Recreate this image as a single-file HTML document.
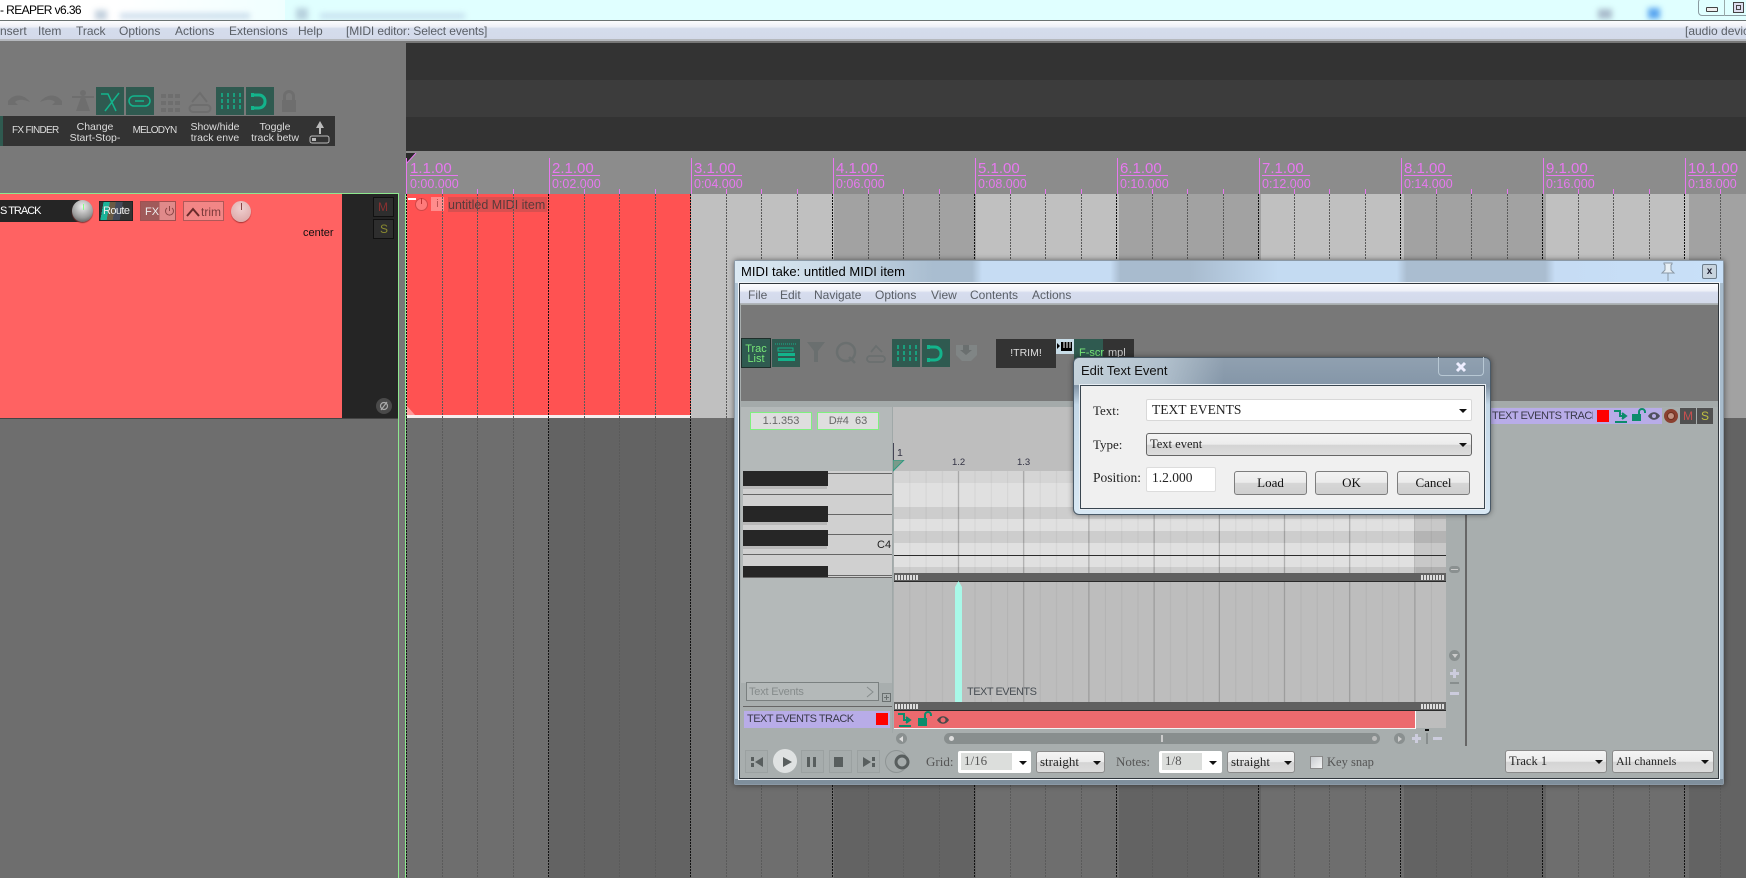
<!DOCTYPE html>
<html><head><meta charset="utf-8"><title>REAPER v6.36</title>
<style>
html,body{margin:0;padding:0;width:1746px;height:878px;overflow:hidden;background:#6e6e6e;font-family:"Liberation Sans",sans-serif}
div,span,svg{position:absolute;display:block;box-sizing:border-box}
.t{white-space:nowrap;line-height:14px}
.m{font-size:12px;color:#5a5f66;top:24px}
.mm{font-size:12px;color:#5a5f66;top:288px}
.rb{font-size:15px;color:#e878f0;top:161px;width:48px;border-bottom:1px solid #e878f0;height:15px;line-height:15px}
.rt{font-size:12.500px;color:#e878f0;top:177px;white-space:nowrap;line-height:14px}
.tk{width:1px;top:158px;height:36px;background:#e878f0}
.tb{font-size:10.500px;color:#ddd;line-height:11px;text-align:center;white-space:nowrap}
.teal{background:#2f5a50}
.s{font-family:"Liberation Serif",serif;font-size:13px;white-space:nowrap;line-height:15px}
.cb{background:linear-gradient(#f4f4f4 0,#ececec 50%,#d4d4d4 52%,#dcdcdc 100%);border:1px solid #8a8a8a;border-radius:3px}
.wb{background:#fff;border-radius:2px}
.ar{width:0;height:0;border-left:4px solid transparent;border-right:4px solid transparent;border-top:4px solid #111}
.bt{background:#a6acac;border:1px solid #9ba1a1;width:23px;height:23px;top:750px}
.dbtn{top:471px;width:73px;height:24px;text-align:center;line-height:22px;color:#111;background:linear-gradient(#f2f2f2 0,#ebebeb 48%,#d6d6d6 50%,#cfcfcf 100%);border:1px solid #7d7d7d;border-radius:3px;font-family:"Liberation Serif",serif;font-size:13px}
.nt{font-size:11px;letter-spacing:-.5px;color:#3a3a4a}
</style></head><body>

<!-- top title bar -->
<div style="left:0;top:0;width:1746px;height:20px;background:#e0ffff"></div>
<div style="left:0;top:0;width:115px;height:20px;background:#fff"></div>
<div style="left:115px;top:0;width:170px;height:20px;background:linear-gradient(90deg,#fff,#f0ffff)"></div>
<div style="left:95px;top:10px;width:12px;height:10px;background:#9db3c8;filter:blur(3px);opacity:.6"></div>
<div style="left:120px;top:13px;width:130px;height:6px;background:#b0c8e0;filter:blur(3px);opacity:.6"></div>
<div style="left:296px;top:8px;width:12px;height:12px;background:#9db3c8;filter:blur(3px);opacity:.6"></div>
<div style="left:320px;top:13px;width:145px;height:6px;background:#b8cfe6;filter:blur(3px);opacity:.6"></div>
<div style="left:1598px;top:9px;width:14px;height:10px;background:#a9bccc;filter:blur(3px)"></div>
<div style="left:1648px;top:8px;width:12px;height:11px;background:#5aa6f0;filter:blur(3px)"></div>
<div class="t" style="left:0;top:3px;font-size:12px;letter-spacing:-.6px;color:#000">- REAPER v6.36</div>
<div style="left:1698px;top:-2px;width:60px;height:18px;border:1px solid #8a9aa0;border-radius:4px"></div>
<div style="left:1724px;top:0;width:1px;height:16px;background:#9aa"></div>
<div style="left:1706px;top:7px;width:12px;height:5px;border:1px solid #444;background:#eee;border-radius:1px"></div>
<div style="left:1733px;top:2px;width:11px;height:11px;border:1px solid #444;background:#dde"></div>
<div style="left:1736px;top:5px;width:5px;height:5px;border:1px solid #444"></div>
<div style="left:0;top:20px;width:1746px;height:1px;background:#6a7272"></div>
<!-- main menu -->
<div style="left:0;top:21px;width:1746px;height:19px;background:linear-gradient(#fcfcfe 0,#eef0f7 30%,#d5dcec 40%,#d3daea 100%)"></div>
<div style="left:0;top:39px;width:1746px;height:2px;background:#b5b8bd"></div>
<div class="t m" style="left:0">nsert</div>
<div class="t m" style="left:38px">Item</div>
<div class="t m" style="left:76px">Track</div>
<div class="t m" style="left:119px">Options</div>
<div class="t m" style="left:175px">Actions</div>
<div class="t m" style="left:229px">Extensions</div>
<div class="t m" style="left:298px">Help</div>
<div class="t m" style="left:346px;letter-spacing:-.1px">[MIDI editor: Select events]</div>
<div class="t m" style="left:1685px">[audio device</div>

<!-- left panel -->
<div style="left:0;top:41px;width:406px;height:153px;background:#797979"></div>
<div style="left:0;top:194px;width:398px;height:684px;background:#6e6e6e"></div>
<div style="left:398px;top:194px;width:8px;height:684px;background:#777"></div>

<!-- arrange top -->
<div style="left:406px;top:41px;width:1340px;height:2px;background:#777"></div>
<div style="left:406px;top:43px;width:1340px;height:37px;background:#333"></div>
<div style="left:406px;top:80px;width:1340px;height:37px;background:#3c3c3c"></div>
<div style="left:406px;top:117px;width:1340px;height:34px;background:#333"></div>

<!-- left toolbar icons -->
<svg style="left:0;top:85px" width="300" height="32" viewBox="0 0 300 32">
<g fill="#6e6e6e">
<path d="M8 16c6-8 16-7 22 1-7-3-12-3-15 0l3 3H8z"/>
<path d="M62 16c-6-8-16-7-22 1 7-3 12-3 15 0l-3 3h10z"/>
<path d="M76 26l5-14h4l5 14zM72 11h22v2H72zM83 5a3 3 0 110 6 3 3 0 010-6z"/>
<g><rect x="161" y="9" width="5" height="4"/><rect x="168" y="9" width="5" height="4"/><rect x="175" y="9" width="5" height="4"/><rect x="161" y="16" width="5" height="4"/><rect x="168" y="16" width="5" height="4"/><rect x="175" y="16" width="5" height="4"/><rect x="161" y="23" width="5" height="4"/><rect x="168" y="23" width="5" height="4"/><rect x="175" y="23" width="5" height="4"/></g>
<path d="M284 15v-4a6 6 0 0112 0v4h-3v-4a3 3 0 00-6 0v4zM283 15h14v12h-14z" transform="translate(-1 0)"/>
</g>
<g fill="none" stroke="#6e6e6e" stroke-width="2"><path d="M192 17l8-9 7 9M193 20h14a3 3 0 010 7h-14a3 3 0 010-7z"/></g>
</svg>
<div class="teal" style="left:96px;top:87px;width:28px;height:28px"></div>
<div class="teal" style="left:126px;top:87px;width:28px;height:28px"></div>
<div class="teal" style="left:216px;top:87px;width:28px;height:28px"></div>
<div class="teal" style="left:246px;top:87px;width:28px;height:28px"></div>
<svg style="left:96px;top:87px" width="178" height="28" viewBox="0 0 178 28" fill="none" stroke="#13b48c" stroke-width="1.500">
<path d="M5 7h7l8 17M23 6L9 24" />
<rect x="33" y="9" width="21" height="10" rx="5"/><path d="M39 14h9"/>
<g stroke-dasharray="4 2" stroke-width="1.500"><path d="M126 6v17M132 6v17M138 6v17M144 6v17"/></g>
<path d="M157 8h6a6 6 0 016 6v1a6 6 0 01-6 6h-6" stroke-width="3"/><path d="M155 8h3M155 21h3" stroke-width="4"/>
</svg>

<!-- left dark toolbar -->
<div style="left:0;top:116px;width:335px;height:30px;background:#333"></div>
<div style="left:0;top:116px;width:3px;height:30px;background:#2f5a50"></div>
<div class="tb" style="left:12px;top:125px;width:46px;font-size:10px;letter-spacing:-.7px">FX FINDER</div>
<div class="tb" style="left:66px;top:122px;width:58px">Change<br>Start-Stop-</div>
<div class="tb" style="left:132px;top:125px;width:45px;font-size:10px;letter-spacing:-.8px">MELODYN</div>
<div class="tb" style="left:186px;top:122px;width:58px">Show/hide<br>track enve</div>
<div class="tb" style="left:246px;top:122px;width:58px">Toggle<br>track betw</div>
<svg style="left:308px;top:119px" width="24" height="26" viewBox="0 0 24 26"><path d="M12 2l4 7h-3v6h-2V9H8z" fill="#bbb"/><rect x="2" y="17" width="19" height="7" rx="2" fill="none" stroke="#bbb"/><rect x="4" y="19" width="4" height="3" fill="#bbb"/></svg>

<!-- ruler -->
<div style="left:406px;top:151px;width:1340px;height:43px;background:#8c8c8c"></div>
<svg style="left:406px;top:153px" width="14" height="12" viewBox="0 0 14 12"><path d="M0 0h10L0 11z" fill="#2a2a2a"/><path d="M0 11L10 0" stroke="#e878f0"/></svg>
<div class="tk" style="left:406px"></div><div class="tk" style="left:549px"></div><div class="tk" style="left:691px"></div><div class="tk" style="left:833px"></div><div class="tk" style="left:975px"></div><div class="tk" style="left:1117px"></div><div class="tk" style="left:1259px"></div><div class="tk" style="left:1401px"></div><div class="tk" style="left:1543px"></div><div class="tk" style="left:1685px"></div>
<svg style="left:406px;top:189px" width="1340" height="5"><defs><pattern id="bt" patternUnits="userSpaceOnUse" width="142" height="5"><rect x="36" width="1" height="5" fill="#e878f0"/><rect x="71" width="1" height="5" fill="#e878f0"/><rect x="107" width="1" height="5" fill="#e878f0"/></pattern></defs><rect width="1340" height="5" fill="url(#bt)"/></svg>
<div class="rb" style="left:410px">1.1.00</div><div class="rt" style="left:410px">0:00.000</div>
<div class="rb" style="left:552px">2.1.00</div><div class="rt" style="left:552px">0:02.000</div>
<div class="rb" style="left:694px">3.1.00</div><div class="rt" style="left:694px">0:04.000</div>
<div class="rb" style="left:836px">4.1.00</div><div class="rt" style="left:836px">0:06.000</div>
<div class="rb" style="left:978px">5.1.00</div><div class="rt" style="left:978px">0:08.000</div>
<div class="rb" style="left:1120px">6.1.00</div><div class="rt" style="left:1120px">0:10.000</div>
<div class="rb" style="left:1262px">7.1.00</div><div class="rt" style="left:1262px">0:12.000</div>
<div class="rb" style="left:1404px">8.1.00</div><div class="rt" style="left:1404px">0:14.000</div>
<div class="rb" style="left:1546px">9.1.00</div><div class="rt" style="left:1546px">0:16.000</div>
<div class="rb" style="left:1688px;">10.1.00</div><div class="rt" style="left:1688px">0:18.000</div>

<!-- arrange body backgrounds -->
<div style="left:406px;top:194px;width:1340px;height:224px;background:repeating-linear-gradient(90deg,#c0c0c0 0 143px,#a2a2a2 143px 285px)"></div>
<div style="left:406px;top:418px;width:1340px;height:460px;background:repeating-linear-gradient(90deg,#6e6e6e 0 143px,#636363 143px 285px)"></div>

<!-- track panel -->
<div style="left:0;top:193px;width:342px;height:225px;background:#ff6262"></div>
<div style="left:342px;top:193px;width:56px;height:225px;background:#252525"></div>
<div style="left:0;top:193px;width:399px;height:1px;background:#8ee88e"></div>
<div style="left:398px;top:193px;width:1px;height:685px;background:#8ee88e"></div>
<div style="left:405px;top:194px;width:1px;height:684px;background:#8ee88e"></div>
<div style="left:0;top:418px;width:398px;height:1px;background:#444"></div>
<div style="left:0;top:200px;width:88px;height:22px;background:#252525;border-radius:0 10px 10px 0"></div>
<div class="t" style="left:0;top:204px;font-size:11px;letter-spacing:-1px;color:#fff">S TRACK</div>
<div style="left:72px;top:200px;width:21px;height:22px;border-radius:50%;background:radial-gradient(circle at 50% 30%,#f0f0f0,#9a9a9a 60%,#444);box-shadow:0 1px 1px #833"></div>
<div style="left:83px;top:204px;width:1px;height:6px;background:#8f8"></div>
<div style="left:99px;top:201px;width:34px;height:20px;background:linear-gradient(100deg,#333 0 10%,#1bb398 10% 28%,#6a5a44 28% 45%,#444a5a 45% 65%,#333 65%);border:1px solid #222"></div>
<div class="t" style="left:103px;top:204px;font-size:11px;letter-spacing:-.6px;color:#eee">Route</div>
<div style="left:140px;top:201px;width:36px;height:20px;background:linear-gradient(90deg,#a05a5a 0 55%,#e08a8a 55%);border:1px solid #a05050"></div>
<div class="t" style="left:145px;top:205px;font-size:11px;color:#eee">FX</div>
<svg style="left:164px;top:205px" width="11" height="12" viewBox="0 0 11 12" fill="none" stroke="#8a4444"><path d="M3 3a4 4 0 105 0M5.500 1v5"/></svg>
<div style="left:183px;top:201px;width:41px;height:20px;background:#f28686;border:1px solid #b05858"></div>
<svg style="left:186px;top:207px" width="14" height="10" viewBox="0 0 14 10" fill="none" stroke="#6a2a2a" stroke-width="2"><path d="M1 9l6-7 6 7"/></svg>
<div class="t" style="left:201px;top:205px;font-size:12px;color:#7a3a3a">trim</div>
<div style="left:231px;top:201px;width:20px;height:21px;border-radius:50%;background:radial-gradient(circle at 50% 35%,#f0d0d0,#d8a0a0);box-shadow:0 1px 1px #a33"></div>
<div style="left:241px;top:203px;width:1px;height:7px;background:#844"></div>
<div class="t" style="left:303px;top:226px;font-size:11px;color:#111">center</div>
<div style="left:373px;top:197px;width:21px;height:20px;background:#2e2e2e;border:1px solid #111"></div>
<div class="t" style="left:378px;top:200px;font-size:12px;color:#8a3030">M</div>
<div style="left:373px;top:219px;width:21px;height:20px;background:#2e2e2e;border:1px solid #111"></div>
<div class="t" style="left:380px;top:222px;font-size:12px;color:#8a8a30">S</div>
<div style="left:376px;top:398px;width:16px;height:16px;border-radius:50%;background:#4a4a4a"></div>
<svg style="left:379px;top:401px" width="10" height="10" viewBox="0 0 10 10" fill="none" stroke="#aaa" stroke-width="1.200"><circle cx="5" cy="5" r="3.500"/><path d="M2 9L8 1"/></svg>

<!-- media item -->
<div style="left:407px;top:194px;width:284px;height:221px;background:#ff5252"></div>
<div style="left:407px;top:415px;width:284px;height:3px;background:#f6eeee"></div>
<svg style="left:407px;top:406px" width="10" height="9" viewBox="0 0 10 9"><path d="M0 0L8 9H0z" fill="#ff9a9a"/></svg>
<div style="left:448px;top:197px;width:99px;height:15px;background:#d85050"></div>
<div style="left:415px;top:198px;width:13px;height:13px;border-radius:50%;background:#ff7a7a;border:1px solid #d04848"></div>
<div style="left:421px;top:198px;width:1px;height:6px;background:#b33"></div>
<div style="left:431px;top:197px;width:13px;height:14px;background:#ff8c8c;color:#b85050;font-size:11px;text-align:center;line-height:14px">i</div>
<div class="t" style="left:448px;top:198px;font-size:12.500px;color:#5a3a3a">untitled MIDI item</div>

<!-- dotted grid -->
<svg style="left:406px;top:194px" width="1340" height="684"><defs><pattern id="g" patternUnits="userSpaceOnUse" width="142" height="3"><rect x="36" width="1" height="2" fill="#5a5a5a"/><rect x="71" width="1" height="2" fill="#5a5a5a"/><rect x="107" width="1" height="2" fill="#5a5a5a"/><rect x="0" width="1" height="2" fill="#111"/></pattern></defs><rect width="1340" height="684" fill="url(#g)"/></svg>
<div style="left:408px;top:198px;width:8px;height:2px;background:#fff"></div>

<!-- MIDI WINDOW -->
<div style="left:734px;top:260px;width:990px;height:525px;background:linear-gradient(90deg,#d8e6f2,#c8ddf2);border:1px solid #8b99a6;border-radius:2px;box-shadow:0 0 6px rgba(0,0,0,.5)"></div>
<div style="left:735px;top:261px;width:988px;height:22px;background:linear-gradient(90deg,#dbe9f3 0,#c9d9e6 10%,#a9bdd0 20%,#a9bdd0 24%,#c6dcf3 25%,#c6dcf3 38%,#a8bbce 39%,#a8bbce 46%,#c4dbf2 55%,#c4dbf2 67%,#aabdd0 68%,#aabdd0 82%,#c6dcf4 83%,#c8e0f8 100%)"></div>
<div style="left:735px;top:778px;width:988px;height:6px;background:#7f8f9c"></div>
<div style="left:735px;top:283px;width:5px;height:496px;background:#b0c4d4"></div>
<div style="left:1718px;top:283px;width:5px;height:496px;background:#a8bccc"></div>
<div class="t" style="left:741px;top:265px;font-size:13px;color:#000">MIDI take: untitled MIDI item</div>
<svg style="left:1659px;top:262px" width="18" height="20" viewBox="0 0 18 20"><path d="M5 1h8v1l-1 1v5l3 3H3l3-3V3L5 2zM9 11v8" fill="#e8f0f6" stroke="#8a98a6"/></svg>
<div style="left:1702px;top:264px;width:15px;height:15px;border:1px solid #6c7c8a;border-radius:2px;background:#c8d4de;text-align:center;font-size:10px;line-height:13px;font-weight:bold;color:#223">x</div>
<div style="left:739px;top:283px;width:980px;height:496px;background:#a8aeae;border:1px solid #30363c;outline:1px solid #f0f4f8"></div>
<div style="left:740px;top:284px;width:978px;height:20px;background:linear-gradient(#fcfcfe 0,#eff1f8 35%,#d6dcee 45%,#d3daea 100%);border-bottom:1px solid #b0b4ba"></div>
<div class="t mm" style="left:748px">File</div><div class="t mm" style="left:780px">Edit</div><div class="t mm" style="left:814px">Navigate</div><div class="t mm" style="left:875px">Options</div><div class="t mm" style="left:931px">View</div><div class="t mm" style="left:970px">Contents</div><div class="t mm" style="left:1032px">Actions</div>
<div style="left:741px;top:305px;width:977px;height:96px;background:#787878"></div>
<!-- midi toolbar -->
<div class="teal" style="left:741px;top:338px;width:30px;height:30px;border:1px solid #1e2e2a"></div>
<div style="left:741px;top:344px;width:30px;text-align:center;color:#78e878;font-size:11px;line-height:10px">Trac<br>List</div>
<div class="teal" style="left:772px;top:339px;width:28px;height:28px"></div>
<svg style="left:772px;top:339px" width="28" height="28" viewBox="0 0 28 28"><path d="M3 5h22" stroke="#13b48c" stroke-dasharray="1 1"/><rect x="6" y="9" width="15" height="3" fill="none" stroke="#13b48c"/><rect x="6" y="14" width="17" height="3" fill="#13b48c"/><rect x="6" y="19" width="17" height="3" fill="#13b48c"/></svg>
<svg style="left:805px;top:340px" width="85" height="26" viewBox="0 0 85 26" fill="none" stroke="#6a6f6f" stroke-width="2.500"><path d="M2 2h18l-7 9v11h-4V11z" fill="#6a6f6f" stroke="none"/><circle cx="41" cy="12" r="9"/><path d="M44 17l6 6"/><path d="M66 12l5-6 6 6M65 16h12a3 3 0 010 6H65a3 3 0 010-6z" stroke-width="1.800"/></svg>
<div class="teal" style="left:892px;top:339px;width:28px;height:28px"></div>
<div class="teal" style="left:922px;top:339px;width:28px;height:28px"></div>
<svg style="left:892px;top:339px" width="58" height="28" viewBox="0 0 58 28" fill="none" stroke="#13b48c" stroke-width="1.500"><g stroke-dasharray="4 2"><path d="M6 6v17M12 6v17M18 6v17M24 6v17"/></g><path d="M37 8h6a6 6 0 016 6v1a6 6 0 01-6 6h-6" stroke-width="3"/><path d="M35 8h3M35 21h3" stroke-width="4"/></svg>
<svg style="left:956px;top:343px" width="21" height="22" viewBox="0 0 21 22"><path d="M0 2h21v10l-6 6H6l-6-6z" fill="#808585"/><path d="M7 2h6v5h3l-6 5-6-5h3z" fill="#6a6f6f"/></svg>
<div style="left:996px;top:339px;width:60px;height:29px;background:#333;color:#ddd;font-size:10.500px;text-align:center;line-height:29px">!TRIM!</div>
<div style="left:1056px;top:339px;width:18px;height:15px;background:#c8dde8"></div>
<svg style="left:1057px;top:341px" width="16" height="11" viewBox="0 0 16 11"><path d="M0 2l3 3-3 3z"/><rect x="4" y="1" width="11" height="9" fill="#000"/><path d="M7 1v6M10 1v6M13 1v6" stroke="#fff"/></svg>
<div class="teal" style="left:1074px;top:339px;width:29px;height:24px"></div>
<div style="left:1103px;top:339px;width:31px;height:24px;background:#333"></div>
<div class="t" style="left:1079px;top:346px;font-size:11px;color:#78e878">F-scr</div>
<div class="t" style="left:1108px;top:346px;font-size:11px;color:#ccc">mpl</div>
<!-- left column -->
<div style="left:741px;top:401px;width:977px;height:6px;background:#a4aaaa"></div>
<div style="left:741px;top:407px;width:151px;height:64px;background:#b4b9b9"></div>
<div style="left:893px;top:407px;width:553px;height:64px;background:#bebebe"></div>
<div style="left:892px;top:407px;width:1px;height:326px;background:#a0a8a8"></div>
<div style="left:750px;top:412px;width:62px;height:18px;background:#dedede;border:1px solid #7ff07f;font-size:11px;color:#666;text-align:center;line-height:16px">1.1.353</div>
<div style="left:817px;top:412px;width:62px;height:18px;background:#dedede;border:1px solid #7ff07f;font-size:11px;color:#666;text-align:center;line-height:16px;white-space:pre">D#4  63</div>
<div style="left:741px;top:471px;width:151px;height:212px;background:#b4b9b9"></div>
<div style="left:743px;top:471px;width:149px;height:107px;background:#d0d0d0"></div>
<div style="left:828px;top:473px;width:64px;height:1px;background:#666"></div>
<div style="left:743px;top:494px;width:149px;height:1px;background:#666"></div>
<div style="left:828px;top:514px;width:64px;height:1px;background:#666"></div>
<div style="left:828px;top:534px;width:64px;height:1px;background:#666"></div>
<div style="left:743px;top:554px;width:149px;height:1px;background:#666"></div>
<div style="left:828px;top:575px;width:64px;height:1px;background:#666"></div>
<div style="left:743px;top:577px;width:149px;height:1px;background:#666"></div>
<div style="left:743px;top:486px;width:84px;height:3px;background:#b8b8b8"></div>
<div style="left:743px;top:522px;width:84px;height:3px;background:#b8b8b8"></div>
<div style="left:743px;top:546px;width:84px;height:3px;background:#b8b8b8"></div>
<div style="left:743px;top:471px;width:85px;height:15px;background:#262626"></div>
<div style="left:743px;top:506px;width:85px;height:16px;background:#262626"></div>
<div style="left:743px;top:530px;width:85px;height:16px;background:#262626"></div>
<div style="left:743px;top:566px;width:85px;height:11px;background:#262626"></div>
<div class="t" style="left:877px;top:538px;font-size:11px;color:#222">C4</div>
<!-- piano roll ruler -->
<div style="left:893px;top:443px;width:1px;height:27px;background:#445"></div>
<div class="t" style="left:897px;top:446px;font-size:10.500px;color:#334">1</div>
<div class="t" style="left:952px;top:456px;font-size:9.500px;color:#334">1.2</div>
<div class="t" style="left:1017px;top:456px;font-size:9.500px;color:#334">1.3</div>
<svg style="left:893px;top:460px" width="12" height="12" viewBox="0 0 12 12"><path d="M0 0h11L0 11z" fill="#7a9a8a" stroke="#2a9a80"/></svg>
<!-- note area -->
<div style="left:894px;top:471px;width:522px;height:102px;background:linear-gradient(#d5d5d5 0 12px,#e0e0e0 12px 36px,#cdcdcd 36px 48px,#e0e0e0 48px 60px,#cdcdcd 60px 72px,#e0e0e0 72px 96px,#cdcdcd 96px)"></div>
<div style="left:1416px;top:471px;width:30px;height:102px;background:linear-gradient(#bcbcbc 0 12px,#c8c8c8 12px 36px,#b4b4b4 36px 48px,#c8c8c8 48px 60px,#b4b4b4 60px 72px,#c8c8c8 72px 96px,#b0b0b0 96px)"></div>
<svg style="left:894px;top:471px" width="552" height="102"><defs><pattern id="n" patternUnits="userSpaceOnUse" width="65.200" height="102"><rect x="15.300" width="1" height="102" fill="#000" fill-opacity=".05"/><rect x="31.600" width="1" height="102" fill="#000" fill-opacity=".05"/><rect x="47.900" width="1" height="102" fill="#000" fill-opacity=".05"/><rect x="64" width="1" height="102" fill="#000" fill-opacity=".28"/></pattern></defs><rect width="552" height="102" fill="url(#n)"/></svg>
<div style="left:894px;top:555px;width:552px;height:1px;background:#2c2c2c"></div>
<div style="left:894px;top:573px;width:552px;height:8px;background:#606060"></div>
<div style="left:894px;top:581px;width:552px;height:1px;background:#2a2a2a"></div>
<div style="left:895px;top:575px;width:24px;height:5px;background:repeating-linear-gradient(90deg,#ddd 0 2px,transparent 2px 3px)"></div>
<div style="left:1421px;top:575px;width:24px;height:5px;background:repeating-linear-gradient(90deg,#ddd 0 2px,transparent 2px 3px)"></div>
<!-- CC lane -->
<div style="left:894px;top:582px;width:552px;height:120px;background:#bdbdbd"></div>
<svg style="left:894px;top:582px" width="552" height="120"><defs><pattern id="c" patternUnits="userSpaceOnUse" width="65.200" height="120"><rect x="15.300" width="1" height="120" fill="#000" fill-opacity=".05"/><rect x="31.600" width="1" height="120" fill="#000" fill-opacity=".05"/><rect x="47.900" width="1" height="120" fill="#000" fill-opacity=".05"/><rect x="64" width="1" height="120" fill="#000" fill-opacity=".22"/></pattern></defs><rect width="552" height="120" fill="url(#c)"/></svg>
<svg style="left:955px;top:581px" width="7" height="122" viewBox="0 0 7 122"><path d="M3.500 0L7 6v116H0V6z" fill="#a8f8e8"/></svg>
<div class="t nt" style="left:967px;top:685px;color:#484e54">TEXT EVENTS</div>
<div style="left:894px;top:702px;width:552px;height:8px;background:#606060"></div>
<div style="left:894px;top:710px;width:552px;height:1px;background:#2a2a2a"></div>
<div style="left:895px;top:704px;width:24px;height:5px;background:repeating-linear-gradient(90deg,#ddd 0 2px,transparent 2px 3px)"></div>
<div style="left:1421px;top:704px;width:24px;height:5px;background:repeating-linear-gradient(90deg,#ddd 0 2px,transparent 2px 3px)"></div>
<div style="left:746px;top:682px;width:133px;height:19px;border:1px solid #7a8080;background:#b4b9b9"></div>
<div class="t" style="left:749px;top:685px;font-size:11px;letter-spacing:-.2px;color:#868c8c">Text Events</div>
<svg style="left:865px;top:686px" width="10" height="12" viewBox="0 0 10 12" fill="none" stroke="#868c8c"><path d="M2 1l6 5-6 5"/></svg>
<div style="left:882px;top:693px;width:9px;height:9px;border:1px solid #6a7070;background:linear-gradient(#6a7070,#6a7070) center/5px 1px no-repeat,linear-gradient(#6a7070,#6a7070) center/1px 5px no-repeat"></div>
<div style="left:743px;top:706px;width:149px;height:1px;background:#666"></div>
<div style="left:744px;top:711px;width:146px;height:17px;background:#b8ace8"></div>
<div class="t nt" style="left:747px;top:712px">TEXT EVENTS TRACK</div>
<div style="left:876px;top:713px;width:12px;height:12px;background:#f00"></div>
<!-- lane strip -->
<div style="left:894px;top:711px;width:552px;height:17px;background:#bdbdbd"></div>
<div style="left:894px;top:711px;width:522px;height:18px;background:#ec6a6e;border-right:1px solid #fff;border-bottom:1px solid #f4f4f4"></div>
<svg style="left:896px;top:711px" width="60" height="18" viewBox="0 0 60 18"><g fill="none" stroke="#0c8c6c" stroke-width="2"><path d="M2 3h6v6h4"/><path d="M10 6l4 3-4 3" fill="#0c8c6c"/></g><rect x="3" y="14" width="12" height="2" fill="#0c8c6c"/><rect x="22" y="7" width="9" height="8" fill="#0c8c6c"/><path d="M29 7V4a3 3 0 016 0v1" fill="none" stroke="#0c8c6c" stroke-width="2"/><path d="M41 9c3-5 9-5 12 0-3 5-9 5-12 0z" fill="#4a4a4a"/><circle cx="47" cy="9" r="2.500" fill="#ec6a6e"/></svg>
<!-- h scrollbar -->
<div style="left:896px;top:733px;width:11px;height:11px;border-radius:50%;background:#8a9090"></div>
<div style="left:899px;top:736px;width:0;height:0;border:3px solid transparent;border-right:4px solid #ddd;border-left:0"></div>
<div style="left:944px;top:733px;width:436px;height:11px;border-radius:6px;background:#888e8e"></div>
<div style="left:949px;top:736px;width:5px;height:5px;border-radius:50%;background:#ddd"></div>
<div style="left:1161px;top:735px;width:2px;height:7px;background:#ccc"></div>
<div style="left:1372px;top:736px;width:5px;height:5px;border-radius:50%;background:#bbb"></div>
<div style="left:1394px;top:733px;width:11px;height:11px;border-radius:50%;background:#8a9090"></div>
<div style="left:1398px;top:736px;width:0;height:0;border:3px solid transparent;border-left:4px solid #ccc;border-right:0"></div>
<div style="left:1412px;top:737px;width:9px;height:3px;background:#ccd"></div><div style="left:1415px;top:734px;width:3px;height:9px;background:#ccd"></div>
<div style="left:1426px;top:733px;width:2px;height:11px;background:#888e8e"></div><div style="left:1425px;top:729px;width:4px;height:2px;background:#111"></div>
<div style="left:1433px;top:737px;width:9px;height:3px;background:#ccd"></div>
<!-- v scrollbar -->
<div style="left:1449px;top:566px;width:11px;height:7px;border-radius:4px;background:#8a9090"></div><div style="left:1451px;top:569px;width:7px;height:1px;background:#ccc"></div>
<div style="left:1449px;top:650px;width:11px;height:11px;border-radius:50%;background:#8a9090"></div>
<div style="left:1452px;top:654px;width:0;height:0;border:3px solid transparent;border-top:4px solid #ccc;border-bottom:0"></div>
<div style="left:1450px;top:672px;width:9px;height:3px;background:#ccd"></div><div style="left:1453px;top:669px;width:3px;height:9px;background:#ccd"></div>
<div style="left:1450px;top:682px;width:9px;height:2px;background:#888e8e"></div>
<div style="left:1450px;top:692px;width:9px;height:3px;background:#ccd"></div>
<div style="left:1465px;top:470px;width:2px;height:276px;background:#666"></div>
<!-- right header -->
<div style="left:1490px;top:408px;width:172px;height:16px;background:#b8ace8"></div>
<div style="left:1492px;top:409px;width:101px;height:15px;overflow:hidden"><div class="t nt" style="left:0;top:0">TEXT EVENTS TRACK</div></div>
<div style="left:1597px;top:410px;width:12px;height:12px;background:#f00"></div>
<svg style="left:1612px;top:408px" width="52" height="16" viewBox="0 0 52 16"><g fill="none" stroke="#0c8c6c" stroke-width="2"><path d="M2 3h6v5h4"/><path d="M10 5l4 3-4 3" fill="#0c8c6c"/></g><rect x="3" y="13" width="12" height="2" fill="#0c8c6c"/><rect x="20" y="6" width="9" height="7" fill="#0c8c6c"/><path d="M27 6V4a3 3 0 016 0v1" fill="none" stroke="#0c8c6c" stroke-width="2"/><path d="M36 8c3-5 9-5 12 0-3 5-9 5-12 0z" fill="#505060"/><circle cx="42" cy="8" r="2" fill="#b8ace8"/></svg>
<div style="left:1664px;top:409px;width:14px;height:14px;border-radius:50%;background:#6e3020;border:3px solid #8a4030"></div>
<div style="left:1668px;top:413px;width:6px;height:6px;border-radius:50%;background:#c09080"></div>
<div style="left:1680px;top:408px;width:16px;height:16px;background:#505050;color:#c85050;font-size:12px;text-align:center;line-height:16px">M</div>
<div style="left:1697px;top:408px;width:16px;height:16px;background:#505050;color:#c0c040;font-size:12px;text-align:center;line-height:16px">S</div>
<!-- transport -->
<div class="bt" style="left:745px"></div>
<div style="left:773px;top:749px;width:24px;height:24px;border-radius:50%;background:#dfe2e2"></div>
<div class="bt" style="left:801px"></div><div class="bt" style="left:829px"></div><div class="bt" style="left:857px"></div>
<div style="left:885px;top:750px;width:23px;height:23px;border-radius:50%;background:#a6acac;border:1px solid #8e9494"></div>
<svg style="left:745px;top:750px" width="165" height="24" viewBox="0 0 165 24" fill="#585e5e"><path d="M6 7h3v4h-3zM6 13h3v4h-3zM18 7v10l-8-5z"/><path d="M38 7l9 5-9 5z"/><rect x="62" y="7" width="3" height="10"/><rect x="68" y="7" width="3" height="10"/><rect x="89" y="7" width="9" height="10"/><path d="M118 7l8 5-8 5zM127 7h3v4h-3zM127 13h3v4h-3z"/><path d="M151 12a6 6 0 1012 0 6 6 0 00-12 0" fill="none" stroke="#585e5e" stroke-width="3"/></svg>
<div class="s" style="left:926px;top:754px;color:#555">Grid:</div>
<div class="wb" style="left:958px;top:751px;width:73px;height:22px"></div>
<div style="left:961px;top:753px;width:51px;height:17px;background:#dcdedc"></div>
<div class="s" style="left:964px;top:753px;color:#555">1/16</div><div class="ar" style="left:1019px;top:761px"></div>
<div class="cb" style="left:1036px;top:751px;width:69px;height:22px"></div>
<div class="s" style="left:1040px;top:754px;color:#222">straight</div><div class="ar" style="left:1093px;top:761px"></div>
<div class="s" style="left:1116px;top:754px;color:#555">Notes:</div>
<div class="wb" style="left:1159px;top:751px;width:63px;height:22px"></div>
<div style="left:1162px;top:753px;width:40px;height:17px;background:#dcdedc"></div>
<div class="s" style="left:1165px;top:753px;color:#555">1/8</div><div class="ar" style="left:1209px;top:761px"></div>
<div class="cb" style="left:1227px;top:751px;width:68px;height:22px"></div>
<div class="s" style="left:1231px;top:754px;color:#222">straight</div><div class="ar" style="left:1284px;top:761px"></div>
<div style="left:1310px;top:756px;width:13px;height:13px;border:1px solid #8a8a8a;background:linear-gradient(135deg,#c8ccd0,#f4f4f4)"></div>
<div class="s" style="left:1327px;top:755px;color:#555;font-size:12.500px">Key snap</div>
<div class="cb" style="left:1505px;top:750px;width:102px;height:23px"></div>
<div class="s" style="left:1509px;top:754px;color:#222;font-size:12.500px">Track 1</div><div class="ar" style="left:1595px;top:760px"></div>
<div class="cb" style="left:1612px;top:750px;width:102px;height:23px"></div>
<div class="s" style="left:1616px;top:754px;color:#222;font-size:12px">All channels</div><div class="ar" style="left:1701px;top:760px"></div>

<!-- DIALOG -->
<div style="left:1073px;top:357px;width:418px;height:158px;border-radius:6px;background:linear-gradient(#90a0b0 0,#8496a8 18%,#c4d8e8 30%,#d8e8f4 100%);border:1px solid #4a5a68;box-shadow:0 0 6px rgba(0,0,0,.45)"></div>
<div style="left:1074px;top:358px;width:150px;height:27px;background:linear-gradient(90deg,rgba(216,228,234,.75),rgba(200,214,224,.6) 60%,rgba(160,176,188,0));border-radius:5px 0 0 0"></div>
<div class="t" style="left:1081px;top:364px;font-size:13px;color:#111">Edit Text Event</div>
<div style="left:1438px;top:357px;width:46px;height:19px;border:1px solid #b8c8d4;border-top:0;border-radius:0 0 4px 4px"></div>
<svg style="left:1454px;top:361px" width="14" height="12" viewBox="0 0 14 12" fill="none" stroke="#eef" stroke-width="3"><path d="M3 2l8 8M11 2l-8 8"/></svg>
<div style="left:1080px;top:385px;width:405px;height:124px;background:#f0f0f0;border:1px solid #3a4650;outline:1px solid #e8eef4"></div>
<div class="s" style="left:1093px;top:403px;color:#222;font-size:13px">Text:</div>
<div style="left:1146px;top:399px;width:326px;height:22px;background:#fff;border:1px solid #d8d8d8;border-radius:2px"></div>
<div class="s" style="left:1152px;top:402px;color:#222;font-size:13.500px">TEXT EVENTS</div><div class="ar" style="left:1459px;top:409px"></div>
<div class="s" style="left:1093px;top:437px;color:#222;font-size:13px">Type:</div>
<div class="cb" style="left:1146px;top:433px;width:326px;height:23px;border-color:#666"></div>
<div class="s" style="left:1150px;top:437px;color:#222;font-size:12.500px">Text event</div><div class="ar" style="left:1459px;top:443px"></div>
<div class="s" style="left:1093px;top:470px;color:#222;font-size:13.500px">Position:</div>
<div style="left:1146px;top:467px;width:70px;height:25px;background:#fff;border:1px solid #dcdcdc;border-radius:2px"></div>
<div class="s" style="left:1152px;top:470px;color:#222;font-size:13.500px">1.2.000</div>
<div class="dbtn" style="left:1234px">Load</div>
<div class="dbtn" style="left:1315px">OK</div>
<div class="dbtn" style="left:1397px">Cancel</div>
</body></html>
